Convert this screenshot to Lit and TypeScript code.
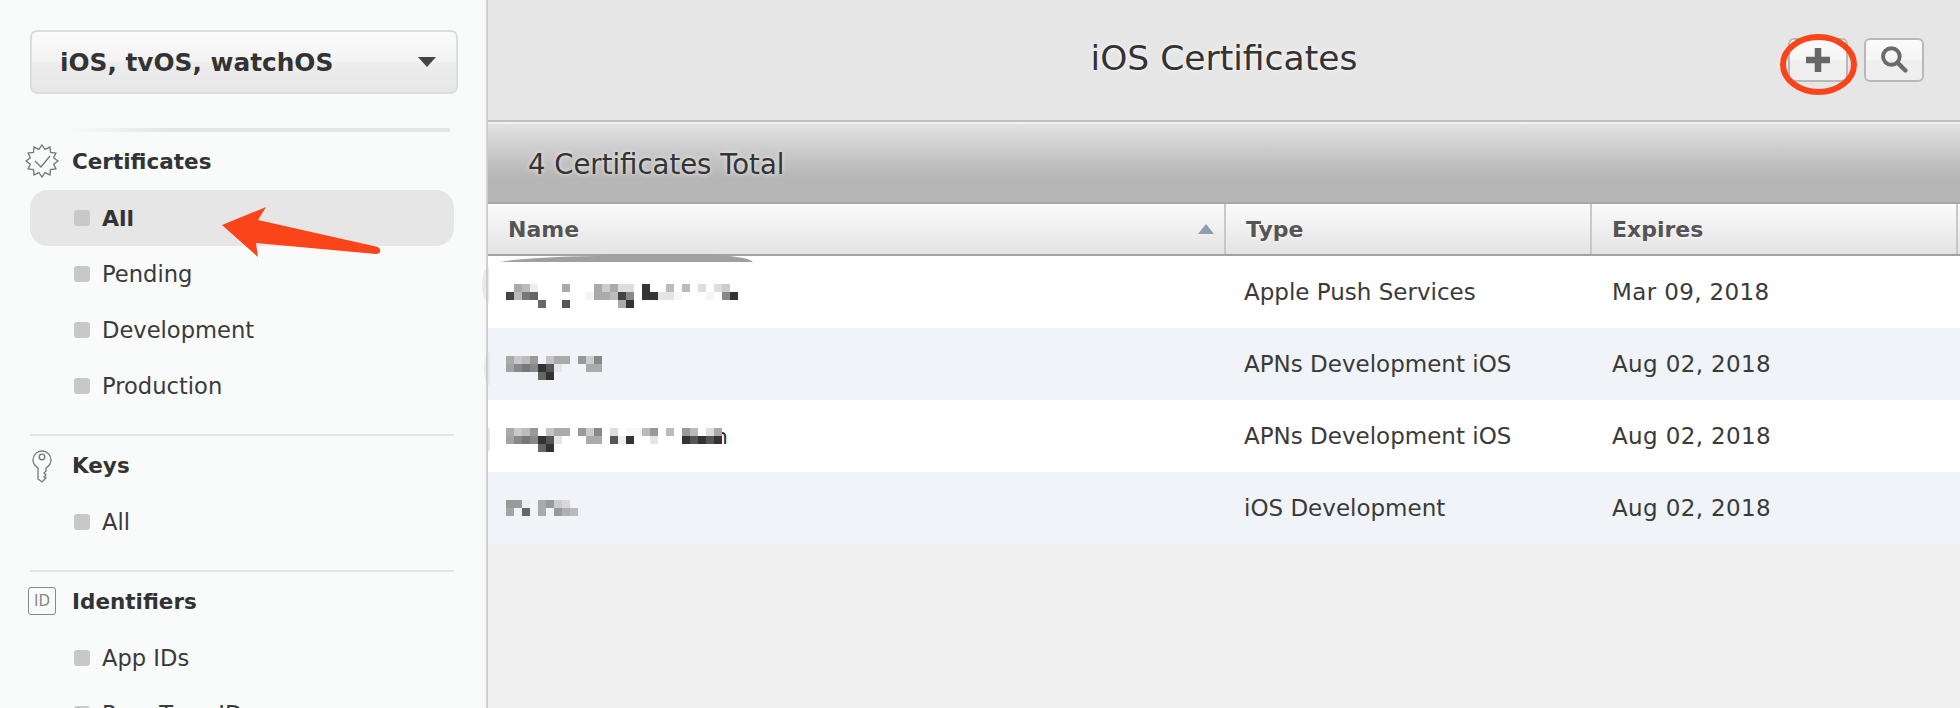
import { LitElement, html, css, svg } from "lit";
import { customElement } from "lit/decorators.js";

type Cell = [number, number, string];

// first chunk of the pixelated names, shared by rows 2 and 3
const longName: Cell[] = [
  [0, 0, "#aaa"], [1, 0, "#c8c8cc"], [2, 0, "#bbb"], [3, 0, "#999"], [5, 0, "#c4c4c8"], [6, 0, "#aaa"], [7, 0, "#aaa"],
  [9, 0, "#999"], [10, 0, "#ccc"], [11, 0, "#888"],
  [0, 1, "#a4a4a8"], [1, 1, "#888"], [2, 1, "#777"], [3, 1, "#888"], [4, 1, "#333"], [5, 1, "#555"], [6, 1, "#e5e5e8"],
  [10, 1, "#aaa"], [11, 1, "#aaa"],
  [4, 2, "#666"], [5, 2, "#333"],
];

const certs = [
  {
    type: "Apple Push Services",
    expires: "Mar 09, 2018",
    bulge: "b1",
    cells: [
      [1, 0, "#aaa"], [2, 0, "#bbb"], [3, 0, "#eee"], [7, 0, "#aaa"], [11, 0, "#aaa"], [12, 0, "#ccc"], [13, 0, "#aaa"],
      [14, 0, "#ddd"], [15, 0, "#ddd"], [17, 0, "#333"], [20, 0, "#bbb"], [22, 0, "#bbb"], [24, 0, "#ddd"], [26, 0, "#ddd"], [27, 0, "#ccc"],
      [0, 1, "#444"], [1, 1, "#bbb"], [2, 1, "#777"], [3, 1, "#666"], [10, 1, "#f5f5f5"], [11, 1, "#aaa"], [12, 1, "#aaa"],
      [13, 1, "#bbb"], [14, 1, "#444"], [15, 1, "#888"], [17, 1, "#333"], [18, 1, "#333"], [19, 1, "#e5e5e5"], [20, 1, "#e5e5e5"],
      [21, 1, "#f8f8f8"], [25, 1, "#f5f5f5"], [27, 1, "#888"], [28, 1, "#333"],
      [4, 2, "#666"], [7, 2, "#555"], [14, 2, "#aaa"], [15, 2, "#333"],
    ] as Cell[],
  },
  { type: "APNs Development iOS", expires: "Aug 02, 2018", bulge: "b2", cells: longName },
  {
    type: "APNs Development iOS",
    expires: "Aug 02, 2018",
    bulge: "b3",
    tail: true,
    cells: [
      ...longName,
      [13, 0, "#ddd"], [15, 0, "#f8f8f8"], [16, 0, "#f8f8f8"], [17, 0, "#bbb"], [18, 0, "#999"], [20, 0, "#bbb"],
      [22, 0, "#999"], [23, 0, "#bbb"], [25, 0, "#ddd"], [26, 0, "#aaa"],
      [13, 1, "#555"], [14, 1, "#eee"], [15, 1, "#333"], [18, 1, "#e5e5e5"], [22, 1, "#333"], [23, 1, "#555"],
      [24, 1, "#333"], [25, 1, "#555"], [26, 1, "#333"],
    ] as Cell[],
  },
  {
    type: "iOS Development",
    expires: "Aug 02, 2018",
    cells: [
      [0, 0, "#999"], [1, 0, "#999"], [2, 0, "#eee"], [4, 0, "#aaa"], [5, 0, "#999"], [6, 0, "#ccc"], [7, 0, "#d8d8dc"],
      [0, 1, "#a4a4a8"], [2, 1, "#666"], [4, 1, "#aaa"], [6, 1, "#999"], [7, 1, "#b0b0b4"], [8, 1, "#bbb"],
    ] as Cell[],
  },
];

function starPoints(cx: number, cy: number, outer: number, inner: number, n: number) {
  const pts: string[] = [];
  for (let i = 0; i < n * 2; i++) {
    const r = i % 2 ? inner : outer;
    const a = (Math.PI * i) / n - Math.PI / 2;
    pts.push(`${(cx + r * Math.cos(a)).toFixed(1)},${(cy + r * Math.sin(a)).toFixed(1)}`);
  }
  return pts.join(" ");
}

@customElement("app-root")
export class AppRoot extends LitElement {
  static styles = css`
    :host {
      display: block;
      position: relative;
      width: 1960px;
      height: 708px;
      overflow: hidden;
      font-family: "DejaVu Sans", sans-serif;
      color: #333;
    }

    .page {
      display: flex;
      height: 708px;
    }

    /* sidebar */
    .side {
      width: 486px;
      flex: none;
      box-sizing: border-box;
      padding: 30px 32px 0 30px;
      background: #f9fbfa;
    }

    .sep {
      width: 2px;
      flex: none;
      background: #cfcfcf;
      position: relative;
      z-index: 2;
    }

    .popup {
      box-sizing: border-box;
      width: 428px;
      height: 64px;
      border: 2px solid #dcdedd;
      border-radius: 7px;
      background: linear-gradient(#fafbfa 0%, #f3f3f3 48%, #ededed 52%, #e7e7e7 100%);
      display: flex;
      align-items: center;
      justify-content: space-between;
      padding: 0 20px 0 28px;
      font-size: 24.8px;
      font-weight: bold;
      color: #333;
    }

    .caret {
      width: 0;
      height: 0;
      border-left: 9px solid transparent;
      border-right: 9px solid transparent;
      border-top: 10px solid #444;
    }

    .fade {
      height: 4px;
      margin: 34px 4px 0 40px;
      background: linear-gradient(90deg, #f9fbfa, #e4e6e5 25%, #e4e6e5);
    }

    .group-head {
      display: flex;
      align-items: center;
      height: 58px;
      margin-left: -2px;
      font-size: 21.5px;
      font-weight: bold;
      color: #333;
    }

    .group-head .ico {
      width: 36px;
      height: 36px;
      flex: none;
      margin-right: 12px;
      margin-left: -4px;
    }

    .item {
      display: flex;
      align-items: center;
      height: 56px;
      width: 424px;
      box-sizing: border-box;
      padding-left: 44px;
      font-size: 22.6px;
      color: #3a3a3a;
    }

    .item.on {
      background: #e6e6e6;
      border-radius: 18px;
      font-weight: bold;
      font-size: 22px;
      color: #333;
    }

    .dot {
      width: 16px;
      height: 16px;
      border-radius: 3px;
      background: #c8c8c8;
      margin-right: 12px;
      flex: none;
    }

    .rule {
      width: 424px;
      height: 2px;
      background: #e4e6e5;
      margin-top: 20px;
    }

    .ident-id {
      box-sizing: border-box;
      width: 28px;
      height: 28px;
      margin: 0 16px 0 0;
      border: 1.5px solid #888;
      border-radius: 3px;
      display: flex;
      align-items: center;
      justify-content: center;
      font-size: 15px;
      font-weight: normal;
      color: #888;
      flex: none;
    }

    /* main */
    .main {
      flex: 1;
      background: #f0f0f0;
      display: flex;
      flex-direction: column;
    }

    .top {
      flex: none;
      box-sizing: border-box;
      background: #e6e6e6;
      border-bottom: 2px solid #bfbfbf;
      height: 122px;
      position: relative;
      display: flex;
      align-items: center;
      justify-content: center;
      padding: 0 0 4px 0;
    }

    .title {
      font-size: 34.5px;
      color: #333;
      text-shadow: 0 0 4px rgba(255, 255, 255, 0.9);
    }

    .tools {
      position: absolute;
      right: 36px;
      top: 38px;
      display: flex;
      gap: 16px;
    }

    .btn {
      box-sizing: border-box;
      width: 60px;
      height: 44px;
      padding: 0;
      border: 2px solid #b8b8b8;
      border-radius: 6px;
      background: linear-gradient(#fbfbfb 0%, #f5f5f5 48%, #efefef 52%, #eeeeee 100%);
      display: flex;
      align-items: center;
      justify-content: center;
    }

    .band {
      height: 76px;
      flex: none;
      margin-top: 2px;
      border-bottom: 2px solid #a8a8a8;
      background: linear-gradient(#e2e2e2 0%, #c4c4c4 45%, #b6b6b6 70%, #b6b6b6 100%);
      display: flex;
      align-items: center;
      padding: 2px 0 0 40px;
      box-sizing: content-box;
      font-size: 27.5px;
      color: #333;
      text-shadow: 0 0 4px rgba(255, 255, 255, 0.8);
    }

    .cols {
      display: grid;
      grid-template-columns: 738px 366px 366px;
    }

    .thead {
      height: 52px;
      box-sizing: border-box;
      background: linear-gradient(#fbfbfb, #e3e3e3);
      border-bottom: 2px solid #a2a2a2;
      font-size: 22px;
      font-weight: bold;
      color: #555;
      text-shadow: 0 1px 2px rgba(255, 255, 255, 0.9);
    }

    .thead > div {
      box-sizing: border-box;
      display: flex;
      align-items: center;
      justify-content: space-between;
      border-right: 2px solid #c8c8c8;
      padding: 0 10px 0 20px;
    }

    .sort {
      width: 0;
      height: 0;
      border-left: 8px solid transparent;
      border-right: 8px solid transparent;
      border-bottom: 10px solid #8e9db0;
    }

    .row {
      height: 72px;
      background: #fff;
      position: relative;
      font-size: 23px;
      color: #3a3a3a;
      align-items: center;
    }

    .row.alt {
      background: #f0f3f8;
    }

    .row > div {
      padding-left: 18px;
    }

    .row > .date {
      padding-left: 20px;
      letter-spacing: 0.37px;
    }

    .row > .blur {
      padding: 0;
      height: 72px;
    }

    .blur svg {
      display: block;
    }

    .bulge {
      position: absolute;
      background: #e8e8e8;
      border-radius: 50%;
    }

    .b1 { left: -6px; top: 11px; width: 14px; height: 36px; clip-path: inset(0 50% 0 0); }
    .b2 { left: -4px; top: 24px; width: 12px; height: 33px; clip-path: inset(0 50% 0 0); }
    .b3 { left: -2px; top: 27px; width: 8px; height: 25px; clip-path: inset(0 50% 0 0); }

    .smudge {
      position: absolute;
      left: 0;
      top: -4px;
      width: 300px;
      height: 10px;
    }

    .overlay {
      position: absolute;
      left: 0;
      top: 0;
      pointer-events: none;
      z-index: 3;
    }
  `;

  private _item(label: string, on = false) {
    return html`<div class="item ${on ? "on" : ""}"><span class="dot"></span>${label}</div>`;
  }

  private _rects(cells: Cell[]) {
    return cells.map(([c, r, fill]) => svg`<rect x=${18 + c * 8} y=${28 + r * 8} width="8" height="8" fill=${fill}></rect>`);
  }

  render() {
    return html`
      <div class="page">
        <aside class="side">
          <div class="popup">iOS, tvOS, watchOS<span class="caret"></span></div>
          <div class="fade"></div>
          <div class="group-head">
            <svg class="ico" viewBox="0 0 36 36" fill="none" stroke="#777" stroke-width="1.3">
              <polygon points=${starPoints(18, 18, 16, 12, 12)}></polygon>
              <path d="M11 18l6 6 9-11" stroke-width="1.4"></path>
            </svg>
            Certificates
          </div>
          ${this._item("All", true)} ${this._item("Pending")} ${this._item("Development")} ${this._item("Production")}
          <div class="rule"></div>
          <div class="group-head">
            <svg class="ico" viewBox="0 0 36 36" fill="none" stroke="#777" stroke-width="1.3">
              <path d="M14 21c-3-2-5-5-5-8a9 9 0 0 1 18 0c0 3-2 6-5 8v3l-2 2 2 2-2 2 2 1-4 4-4-3z"></path>
              <circle cx="18" cy="10" r="2.8"></circle>
            </svg>
            Keys
          </div>
          ${this._item("All")}
          <div class="rule"></div>
          <div class="group-head">
            <span class="ident-id">ID</span>
            Identifiers
          </div>
          ${this._item("App IDs")} ${this._item("Pass Type IDs")}
        </aside>
        <div class="sep"></div>
        <main class="main">
          <header class="top">
            <div class="title">iOS Certificates</div>
            <div class="tools">
              <button class="btn" aria-label="Add">
                <svg width="26" height="26" viewBox="0 0 26 26"><path d="M13 1v24M1 13h24" stroke="#666" stroke-width="6.5" fill="none"></path></svg>
              </button>
              <button class="btn" aria-label="Search">
                <svg width="28" height="28" viewBox="0 0 32 32" fill="none" stroke="#6a6a6a">
                  <circle cx="13" cy="12" r="9.5" stroke-width="4.5"></circle>
                  <path d="M20 19l9 9" stroke-width="5" stroke-linecap="round"></path>
                </svg>
              </button>
            </div>
          </header>
          <div class="band">4 Certificates Total</div>
          <div class="cols thead">
            <div>Name<span class="sort"></span></div>
            <div>Type</div>
            <div>Expires</div>
          </div>
          ${certs.map(
            (c, i) => html`
              <div class="cols row ${i % 2 ? "alt" : ""}">
                ${c.bulge ? html`<span class="bulge ${c.bulge}"></span>` : ""}
                ${i === 0
                  ? html`<svg class="smudge" viewBox="0 0 300 10"><path d="M12 10Q40 5 110 4 180 0 240 4 262 6 265 10Z" fill="#a0a0a0"></path></svg>`
                  : ""}
                <div class="blur">
                  <svg width="400" height="72" shape-rendering="crispEdges">
                    ${c.tail ? svg`<text x="226" y="44" font-size="22" font-family="DejaVu Sans" fill="#333" shape-rendering="auto">n</text>` : ""}
                    ${this._rects(c.cells)}
                  </svg>
                </div>
                <div>${c.type}</div>
                <div class="date">${c.expires}</div>
              </div>
            `
          )}
        </main>
      </div>
      <svg class="overlay" width="1960" height="708" viewBox="0 0 1960 708">
        <path d="M222 225L266 207 258 220 378 247Q381 249 380 252 379 254 376 254L256 243 258 257Z" fill="#fb4419"></path>
        <ellipse cx="1818.5" cy="64.5" rx="35.5" ry="27.5" fill="none" stroke="#fb4419" stroke-width="6"></ellipse>
      </svg>
    `;
  }
}

declare global {
  interface HTMLElementTagNameMap {
    "app-root": AppRoot;
  }
}
